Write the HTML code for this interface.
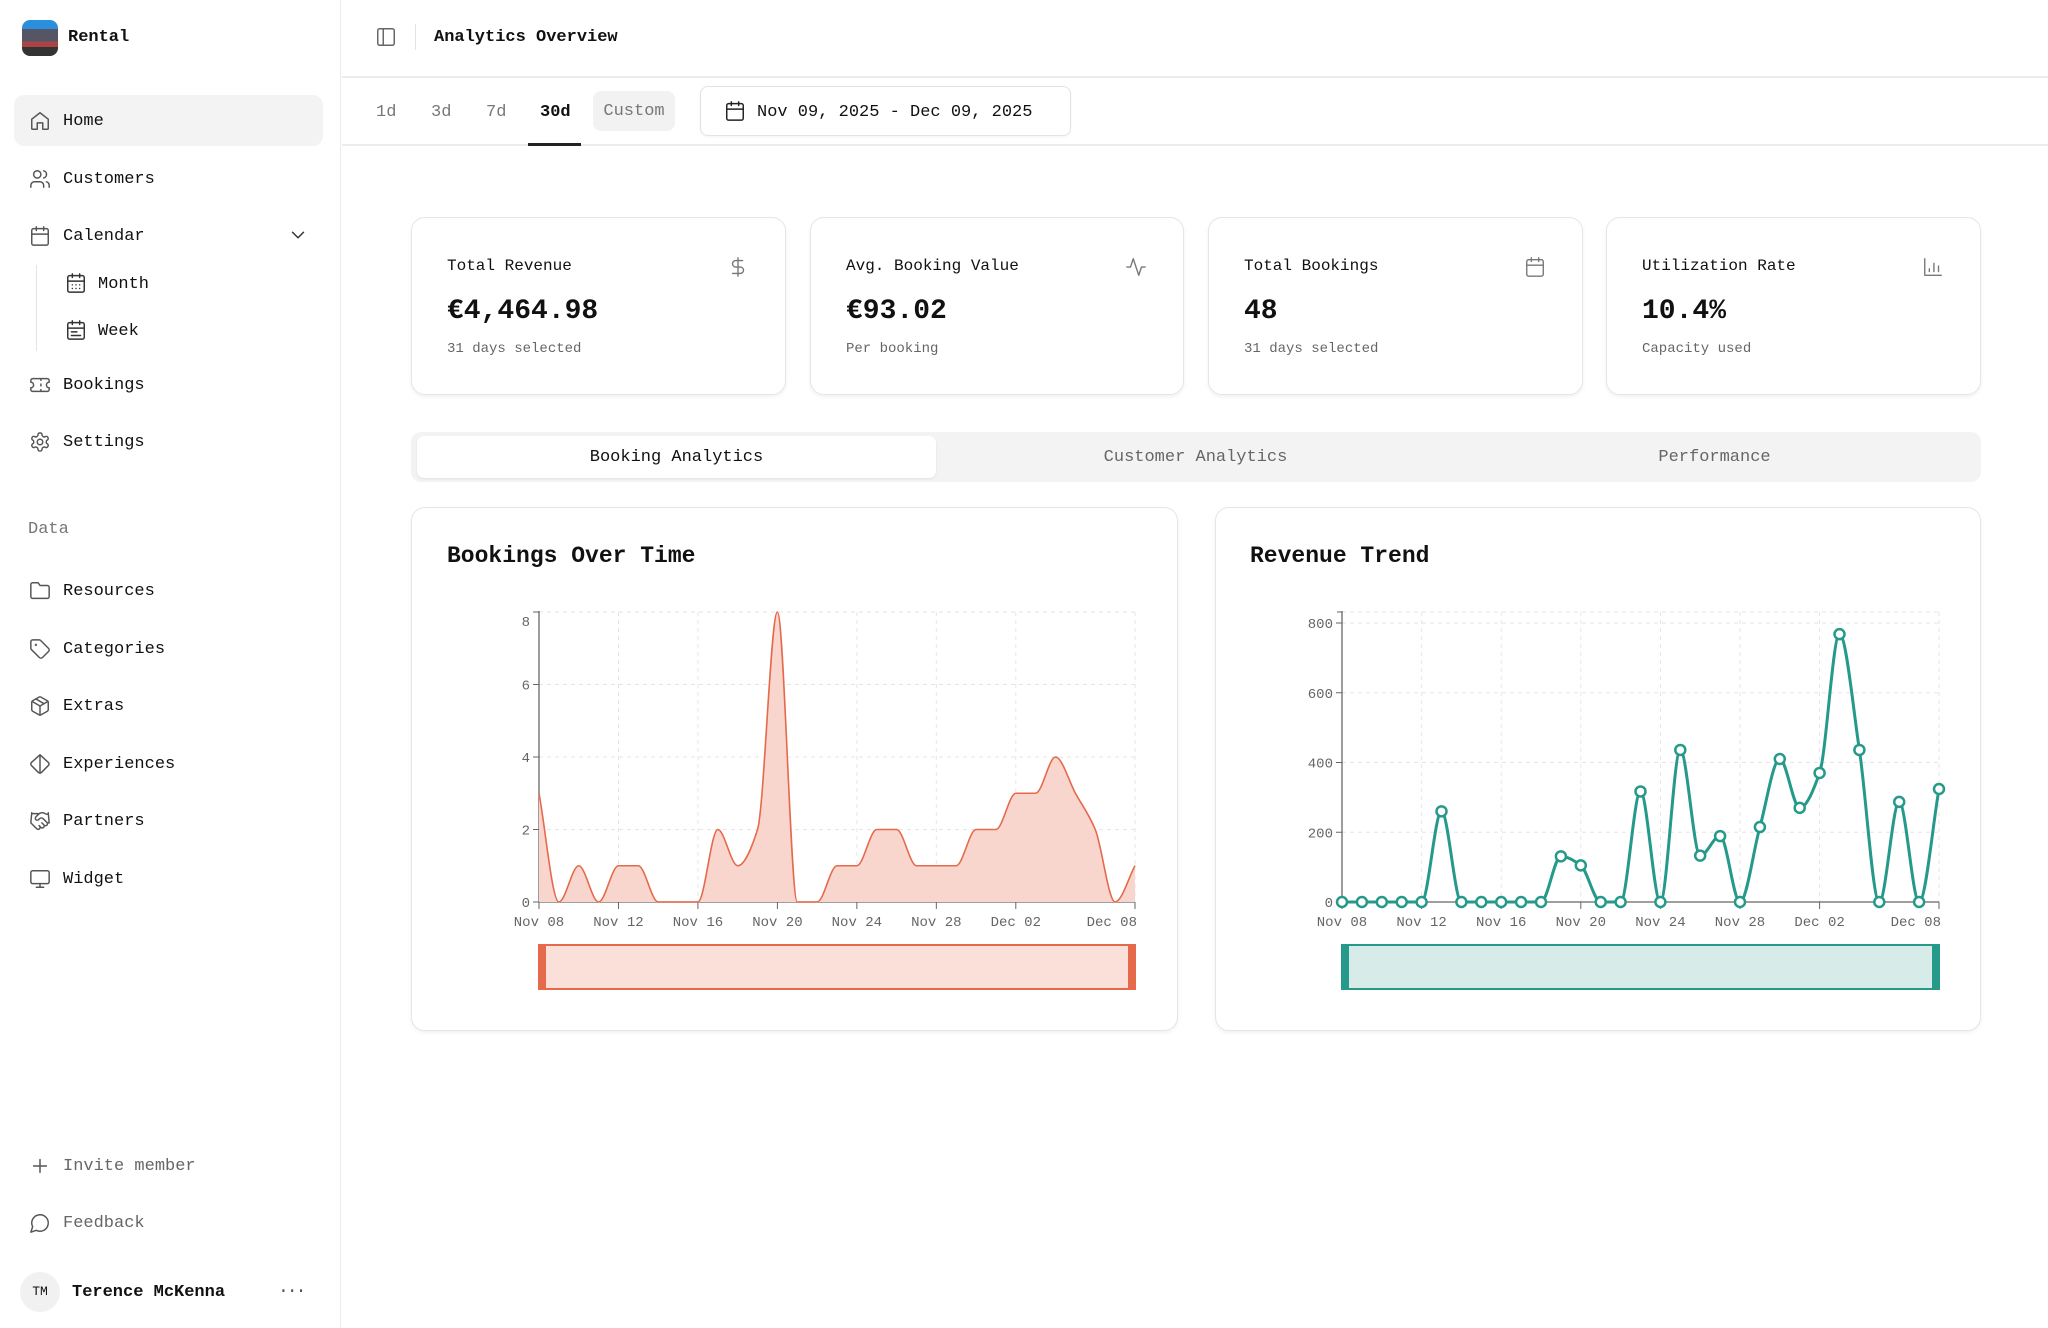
<!DOCTYPE html>
<html><head><meta charset="utf-8"><style>
*{box-sizing:border-box;margin:0;padding:0}
body{width:2048px;height:1328px;background:#fff;font-family:"Liberation Mono",monospace;color:#111;position:relative;overflow:hidden}
.a{position:absolute}
.side{left:0;top:0;width:341px;height:1328px;border-right:1px solid #ececec;background:#fff}
.nav{position:absolute;left:63px;font-size:17px;line-height:20px;color:#111}
.ic{position:absolute;width:22px;height:22px;fill:none;stroke:#555;stroke-width:1.6;stroke-linecap:round;stroke-linejoin:round}
.card{position:absolute;background:#fff;border:1px solid #e6e6e6;border-radius:14px;box-shadow:0 2px 4px rgba(0,0,0,.06)}
.ct{position:absolute;left:35px;top:39px;font-size:16px}
.cv{position:absolute;left:35px;top:78px;font-size:28px;font-weight:bold}
.cs{position:absolute;left:35px;top:123px;font-size:14px;color:#666}
.cic{position:absolute;right:36px;top:38px;width:22px;height:22px;fill:none;stroke:#777;stroke-width:1.5;stroke-linecap:round;stroke-linejoin:round}
</style></head><body>
<div class="a side"></div>
<div class="a" style="left:22px;top:20px;width:36px;height:36px;border-radius:8px;background:linear-gradient(180deg,#2b8fe0 0 25%,#556 25% 60%,#a44 60% 75%,#333 75%)"></div>
<div class="a" style="left:68px;top:28px;font-size:17px;font-weight:bold">Rental</div>
<div class="a" style="left:14px;top:95px;width:309px;height:51px;background:#f3f3f3;border-radius:10px"></div>
<svg class="ic" style="left:29px;top:110px" viewBox="0 0 24 24"><path d="M3 10l9-7 9 7v10a1 1 0 0 1-1 1h-5v-7H9v7H4a1 1 0 0 1-1-1z"/></svg>
<div class="nav" style="top:112px">Home</div>
<svg class="ic" style="left:29px;top:168px" viewBox="0 0 24 24"><circle cx="9" cy="7" r="4"/><path d="M2 21v-2a4 4 0 0 1 4-4h6a4 4 0 0 1 4 4v2M16 3.1a4 4 0 0 1 0 7.8M22 21v-2a4 4 0 0 0-3-3.9"/></svg>
<div class="nav" style="top:170px">Customers</div>
<svg class="ic" style="left:29px;top:225px" viewBox="0 0 24 24"><rect x="3" y="4" width="18" height="18" rx="2"/><path d="M16 2v4M8 2v4M3 10h18"/></svg>
<div class="nav" style="top:227px">Calendar</div>
<svg class="ic" style="left:287px;top:224px;stroke:#333" viewBox="0 0 24 24"><path d="M6 9l6 6 6-6"/></svg>
<div class="a" style="left:36px;top:265px;width:1px;height:86px;background:#e3e3e3"></div>
<svg class="ic" style="left:65px;top:272px;stroke:#333" viewBox="0 0 24 24"><rect x="3" y="4" width="18" height="18" rx="2"/><path d="M16 2v4M8 2v4M3 10h18M8 14h.01M12 14h.01M16 14h.01M8 18h.01M12 18h.01M16 18h.01"/></svg>
<div class="nav" style="left:98px;top:275px">Month</div>
<svg class="ic" style="left:65px;top:319px;stroke:#333" viewBox="0 0 24 24"><rect x="3" y="4" width="18" height="18" rx="2"/><path d="M16 2v4M8 2v4M3 10h18M7 14h6M7 18h10"/></svg>
<div class="nav" style="left:98px;top:322px">Week</div>
<svg class="ic" style="left:29px;top:374px" viewBox="0 0 24 24"><path d="M2 9a3 3 0 0 1 0 6v2a2 2 0 0 0 2 2h16a2 2 0 0 0 2-2v-2a3 3 0 0 1 0-6V7a2 2 0 0 0-2-2H4a2 2 0 0 0-2 2z"/><path d="M13 5v2M13 17v2M13 11v2"/></svg>
<div class="nav" style="top:376px">Bookings</div>
<svg class="ic" style="left:29px;top:431px" viewBox="0 0 24 24"><circle cx="12" cy="12" r="3"/><path d="M12.2 2h-.4a2 2 0 0 0-2 2v.2a2 2 0 0 1-1 1.7l-.4.3a2 2 0 0 1-2 0l-.2-.1a2 2 0 0 0-2.7.7l-.2.4a2 2 0 0 0 .7 2.7l.2.1a2 2 0 0 1 1 1.7v.5a2 2 0 0 1-1 1.7l-.2.1a2 2 0 0 0-.7 2.7l.2.4a2 2 0 0 0 2.7.7l.2-.1a2 2 0 0 1 2 0l.4.3a2 2 0 0 1 1 1.7v.2a2 2 0 0 0 2 2h.4a2 2 0 0 0 2-2v-.2a2 2 0 0 1 1-1.7l.4-.3a2 2 0 0 1 2 0l.2.1a2 2 0 0 0 2.7-.7l.2-.4a2 2 0 0 0-.7-2.7l-.2-.1a2 2 0 0 1-1-1.7v-.5a2 2 0 0 1 1-1.7l.2-.1a2 2 0 0 0 .7-2.7l-.2-.4a2 2 0 0 0-2.7-.7l-.2.1a2 2 0 0 1-2 0l-.4-.3a2 2 0 0 1-1-1.7V4a2 2 0 0 0-2-2z"/></svg>
<div class="nav" style="top:433px">Settings</div>
<div class="nav" style="left:28px;top:520px;color:#777">Data</div>
<svg class="ic" style="left:29px;top:580px" viewBox="0 0 24 24"><path d="M20 20a2 2 0 0 0 2-2V8a2 2 0 0 0-2-2h-8l-2-3H4a2 2 0 0 0-2 2v13a2 2 0 0 0 2 2z"/></svg>
<div class="nav" style="top:582px">Resources</div>
<svg class="ic" style="left:29px;top:638px" viewBox="0 0 24 24"><path d="M12.6 2.6A2 2 0 0 0 11.2 2H4a2 2 0 0 0-2 2v7.2a2 2 0 0 0 .6 1.4l8.7 8.7a2.4 2.4 0 0 0 3.4 0l6.6-6.6a2.4 2.4 0 0 0 0-3.4z"/><circle cx="7.5" cy="7.5" r=".5"/></svg>
<div class="nav" style="top:640px">Categories</div>
<svg class="ic" style="left:29px;top:695px" viewBox="0 0 24 24"><path d="M21 8a2 2 0 0 0-1-1.7l-7-4a2 2 0 0 0-2 0l-7 4A2 2 0 0 0 3 8v8a2 2 0 0 0 1 1.7l7 4a2 2 0 0 0 2 0l7-4a2 2 0 0 0 1-1.7z"/><path d="M3.3 7L12 12l8.7-5M12 22V12M7.5 4.3l9 5.2"/></svg>
<div class="nav" style="top:697px">Extras</div>
<svg class="ic" style="left:29px;top:753px" viewBox="0 0 24 24"><path d="M2.7 10.3a2.4 2.4 0 0 0 0 3.4l7.5 7.5c.9.9 2.5.9 3.4 0l7.5-7.5a2.4 2.4 0 0 0 0-3.4L12 2z"/><path d="M12 2v20"/></svg>
<div class="nav" style="top:755px">Experiences</div>
<svg class="ic" style="left:29px;top:810px" viewBox="0 0 24 24"><path d="M11 17l2 2a1 1 0 1 0 3-3M14 14l2.5 2.5a1 1 0 1 0 3-3l-3.9-3.9a3 3 0 0 0-4.2 0l-.9.9a1 1 0 1 1-3-3l2.8-2.8a5.8 5.8 0 0 1 7.1-.9l.5.3a4 4 0 0 0 2.8.5L21 4M21 3l1 11h-2M3 3L2 14l6.5 6.5a1 1 0 1 0 3-3M3 4h8"/></svg>
<div class="nav" style="top:812px">Partners</div>
<svg class="ic" style="left:29px;top:868px" viewBox="0 0 24 24"><rect x="2" y="3" width="20" height="14" rx="2"/><path d="M8 21h8M12 17v4"/></svg>
<div class="nav" style="top:870px">Widget</div>
<svg class="ic" style="left:29px;top:1155px" viewBox="0 0 24 24"><path d="M5 12h14M12 5v14"/></svg>
<div class="nav" style="top:1157px;color:#666">Invite member</div>
<svg class="ic" style="left:29px;top:1212px" viewBox="0 0 24 24"><path d="M7.9 20A9 9 0 1 0 4 16.1L2 22z"/></svg>
<div class="nav" style="top:1214px;color:#666">Feedback</div>
<div class="a" style="left:20px;top:1272px;width:40px;height:40px;border-radius:50%;background:#f1f1f1;font-size:13px;line-height:40px;text-align:center">TM</div>
<div class="nav" style="left:72px;top:1283px;font-weight:bold">Terence McKenna</div>
<div class="a" style="left:278px;top:1282px;font-size:18px;color:#555;letter-spacing:-2px">···</div>

<!-- header -->
<svg class="ic" style="left:375px;top:26px;stroke:#666" viewBox="0 0 24 24"><rect x="3" y="3" width="18" height="18" rx="2"/><path d="M9 3v18"/></svg>
<div class="a" style="left:415px;top:24px;width:1px;height:26px;background:#e3e3e3"></div>
<div class="a" style="left:434px;top:28px;font-size:17px;font-weight:bold">Analytics Overview</div>
<div class="a" style="left:342px;top:76px;width:1706px;height:2px;background:#ececec"></div>
<div class="a" style="left:342px;top:144px;width:1706px;height:2px;background:#ececec"></div>
<div class="a" style="left:376px;top:103px;font-size:17px;color:#777">1d</div>
<div class="a" style="left:431px;top:103px;font-size:17px;color:#777">3d</div>
<div class="a" style="left:486px;top:103px;font-size:17px;color:#777">7d</div>
<div class="a" style="left:540px;top:103px;font-size:17px;font-weight:bold">30d</div>
<div class="a" style="left:528px;top:143px;width:53px;height:3px;background:#222"></div>
<div class="a" style="left:593px;top:91px;width:82px;height:40px;background:#f2f2f2;border-radius:8px;font-size:17px;color:#777;line-height:42px;text-align:center">Custom</div>
<div class="a" style="left:700px;top:86px;width:371px;height:50px;border:1px solid #e3e3e3;border-radius:8px;box-shadow:0 1px 2px rgba(0,0,0,.05)"></div>
<svg class="ic" style="left:724px;top:100px;stroke:#222" viewBox="0 0 24 24"><rect x="3" y="4" width="18" height="18" rx="2"/><path d="M16 2v4M8 2v4M3 10h18"/></svg>
<div class="a" style="left:757px;top:103px;font-size:17px">Nov 09, 2025 - Dec 09, 2025</div>

<!-- stat cards -->
<div class="card" style="left:411px;top:217px;width:375px;height:178px"><div class="ct">Total Revenue</div><svg class="cic" viewBox="0 0 24 24"><path d="M12 2v20M17 5H9.5a3.5 3.5 0 0 0 0 7h5a3.5 3.5 0 0 1 0 7H6"/></svg><div class="cv">€4,464.98</div><div class="cs">31 days selected</div></div>
<div class="card" style="left:810px;top:217px;width:374px;height:178px"><div class="ct">Avg. Booking Value</div><svg class="cic" viewBox="0 0 24 24"><path d="M22 12h-4l-3 9L9 3l-3 9H2"/></svg><div class="cv">€93.02</div><div class="cs">Per booking</div></div>
<div class="card" style="left:1208px;top:217px;width:375px;height:178px"><div class="ct">Total Bookings</div><svg class="cic" viewBox="0 0 24 24"><rect x="3" y="4" width="18" height="18" rx="2"/><path d="M16 2v4M8 2v4M3 10h18"/></svg><div class="cv">48</div><div class="cs">31 days selected</div></div>
<div class="card" style="left:1606px;top:217px;width:375px;height:178px"><div class="ct">Utilization Rate</div><svg class="cic" viewBox="0 0 24 24"><path d="M3 3v18h18M8 17v-3M13 17V8M18 17v-6"/></svg><div class="cv">10.4%</div><div class="cs">Capacity used</div></div>

<!-- tabs -->
<div class="a" style="left:411px;top:432px;width:1570px;height:50px;background:#f3f3f3;border-radius:10px"></div>
<div class="a" style="left:417px;top:436px;width:519px;height:42px;background:#fff;border-radius:7px;box-shadow:0 1px 2px rgba(0,0,0,.08);font-size:17px;line-height:44px;text-align:center">Booking Analytics</div>
<div class="a" style="left:936px;top:436px;width:519px;height:42px;font-size:17px;line-height:44px;text-align:center;color:#666">Customer Analytics</div>
<div class="a" style="left:1455px;top:436px;width:519px;height:42px;font-size:17px;line-height:44px;text-align:center;color:#666">Performance</div>

<div class="card" style="left:411px;top:507px;width:767px;height:524px"><div class="a" style="left:35px;top:35px;font-size:23px;font-weight:bold">Bookings Over Time</div></div>
<div class="card" style="left:1215px;top:507px;width:766px;height:524px"><div class="a" style="left:34px;top:35px;font-size:23px;font-weight:bold">Revenue Trend</div></div>

<svg id="ch" class="a" style="left:0;top:0" width="2048" height="1328"></svg>
<script>
(function(){
var svg=document.getElementById('ch'),out='';
var labels=['Nov 08','Nov 12','Nov 16','Nov 20','Nov 24','Nov 28','Dec 02'];
function mono(px,py){var n=px.length,h=px[1]-px[0],d=[],m=[];for(var i=0;i<n-1;i++)d.push((py[i+1]-py[i])/h);
m[0]=d[0];m[n-1]=d[n-2];for(i=1;i<n-1;i++){if(d[i-1]*d[i]<=0)m[i]=0;else m[i]=2/(1/d[i-1]+1/d[i]);}
var s='M'+px[0]+','+py[0];for(i=0;i<n-1;i++){s+=' C'+(px[i]+h/3)+','+(py[i]+m[i]*h/3)+' '+(px[i+1]-h/3)+','+(py[i+1]-m[i+1]*h/3)+' '+px[i+1]+','+py[i+1];}return s;}
function chart(c){
var x0=c.x0,x1=c.x1,y0=902,yt=612,h=(x1-x0)/30;
var px=[],py=[];c.data.forEach(function(v,i){px.push(x0+i*h);py.push(y0-v/c.max*(y0-c.ymax));});
c.ticks.forEach(function(t,k){var y=y0-t/c.max*(y0-c.ymax);
if(t>0)out+='<line x1="'+x0+'" y1="'+y+'" x2="'+x1+'" y2="'+y+'" stroke="#e6e6e6" stroke-dasharray="4 4"/>';
out+='<line x1="'+(x0-6)+'" y1="'+y+'" x2="'+x0+'" y2="'+y+'" stroke="#666"/>';
var ly=y+5;if(k==c.ticks.length-1&&c.max==8)ly=y+14;
out+='<text x="'+(x0-9)+'" y="'+ly+'" font-size="14" fill="#666" text-anchor="end" font-family="Liberation Mono">'+t+'</text>';});
out+='<line x1="'+x0+'" y1="'+yt+'" x2="'+x1+'" y2="'+yt+'" stroke="#e6e6e6" stroke-dasharray="4 4"/>';
var idx=[0,4,8,12,16,20,24,30];
idx.forEach(function(k,j){var x=x0+k*h;
if(k>0)out+='<line x1="'+x+'" y1="'+yt+'" x2="'+x+'" y2="'+y0+'" stroke="#e6e6e6" stroke-dasharray="4 4"/>';
out+='<line x1="'+x+'" y1="'+y0+'" x2="'+x+'" y2="'+(y0+7)+'" stroke="#666"/>';
var lab=j<7?labels[j]:'Dec 08';var anc=j<7?'middle':'end';var lx=j<7?x:x+2;
out+='<text x="'+lx+'" y="'+(y0+24)+'" font-size="14" fill="#666" text-anchor="'+anc+'" font-family="Liberation Mono">'+lab+'</text>';});
out+='<line x1="'+x0+'" y1="'+(yt-1)+'" x2="'+x0+'" y2="'+y0+'" stroke="#666" stroke-width="1.3"/><line x1="'+(x0-5)+'" y1="'+yt+'" x2="'+x0+'" y2="'+yt+'" stroke="#666"/>';
out+='<line x1="'+x0+'" y1="'+y0+'" x2="'+x1+'" y2="'+y0+'" stroke="#666" stroke-width="1.3"/>';
var p=mono(px,py);
if(c.fill)out+='<path d="'+p+' L'+x1+','+y0+' L'+x0+','+y0+'Z" fill="'+c.fill+'"/>';
out+='<path d="'+p+'" fill="none" stroke="'+c.color+'" stroke-width="'+c.w+'"/>';
if(c.dots)px.forEach(function(x,i){out+='<circle cx="'+x+'" cy="'+py[i]+'" r="5" fill="#fff" stroke="'+c.color+'" stroke-width="2.5"/>';});
out+='<rect x="'+x0+'" y="945" width="'+(x1-x0)+'" height="44" fill="'+c.sl+'" stroke="'+c.color+'" stroke-width="2"/>';
out+='<rect x="'+x0+'" y="945" width="7" height="44" fill="'+c.color+'"/><rect x="'+(x1-7)+'" y="945" width="7" height="44" fill="'+c.color+'"/>';
}
chart({x0:539,x1:1135,max:8,ymax:612,ticks:[0,2,4,6,8],data:[3,0,1,0,1,1,0,0,0,2,1,2,8,0,0,1,1,2,2,1,1,1,2,2,3,3,4,3,2,0,1],color:'#e5694b',fill:'#f9d6cd',w:1.6,sl:'#fbe0da'});
chart({x0:1342,x1:1939,max:800,ymax:623,ticks:[0,200,400,600,800],data:[0,0,0,0,0,260,0,0,0,0,0,131,105,0,0,317,0,436,133,189,0,215,410,270,370,768,436,0,287,0,324],color:'#25998a',fill:null,w:3,dots:true,sl:'#d7ebe8'});
svg.innerHTML=out;
})();
</script>
</body></html>
